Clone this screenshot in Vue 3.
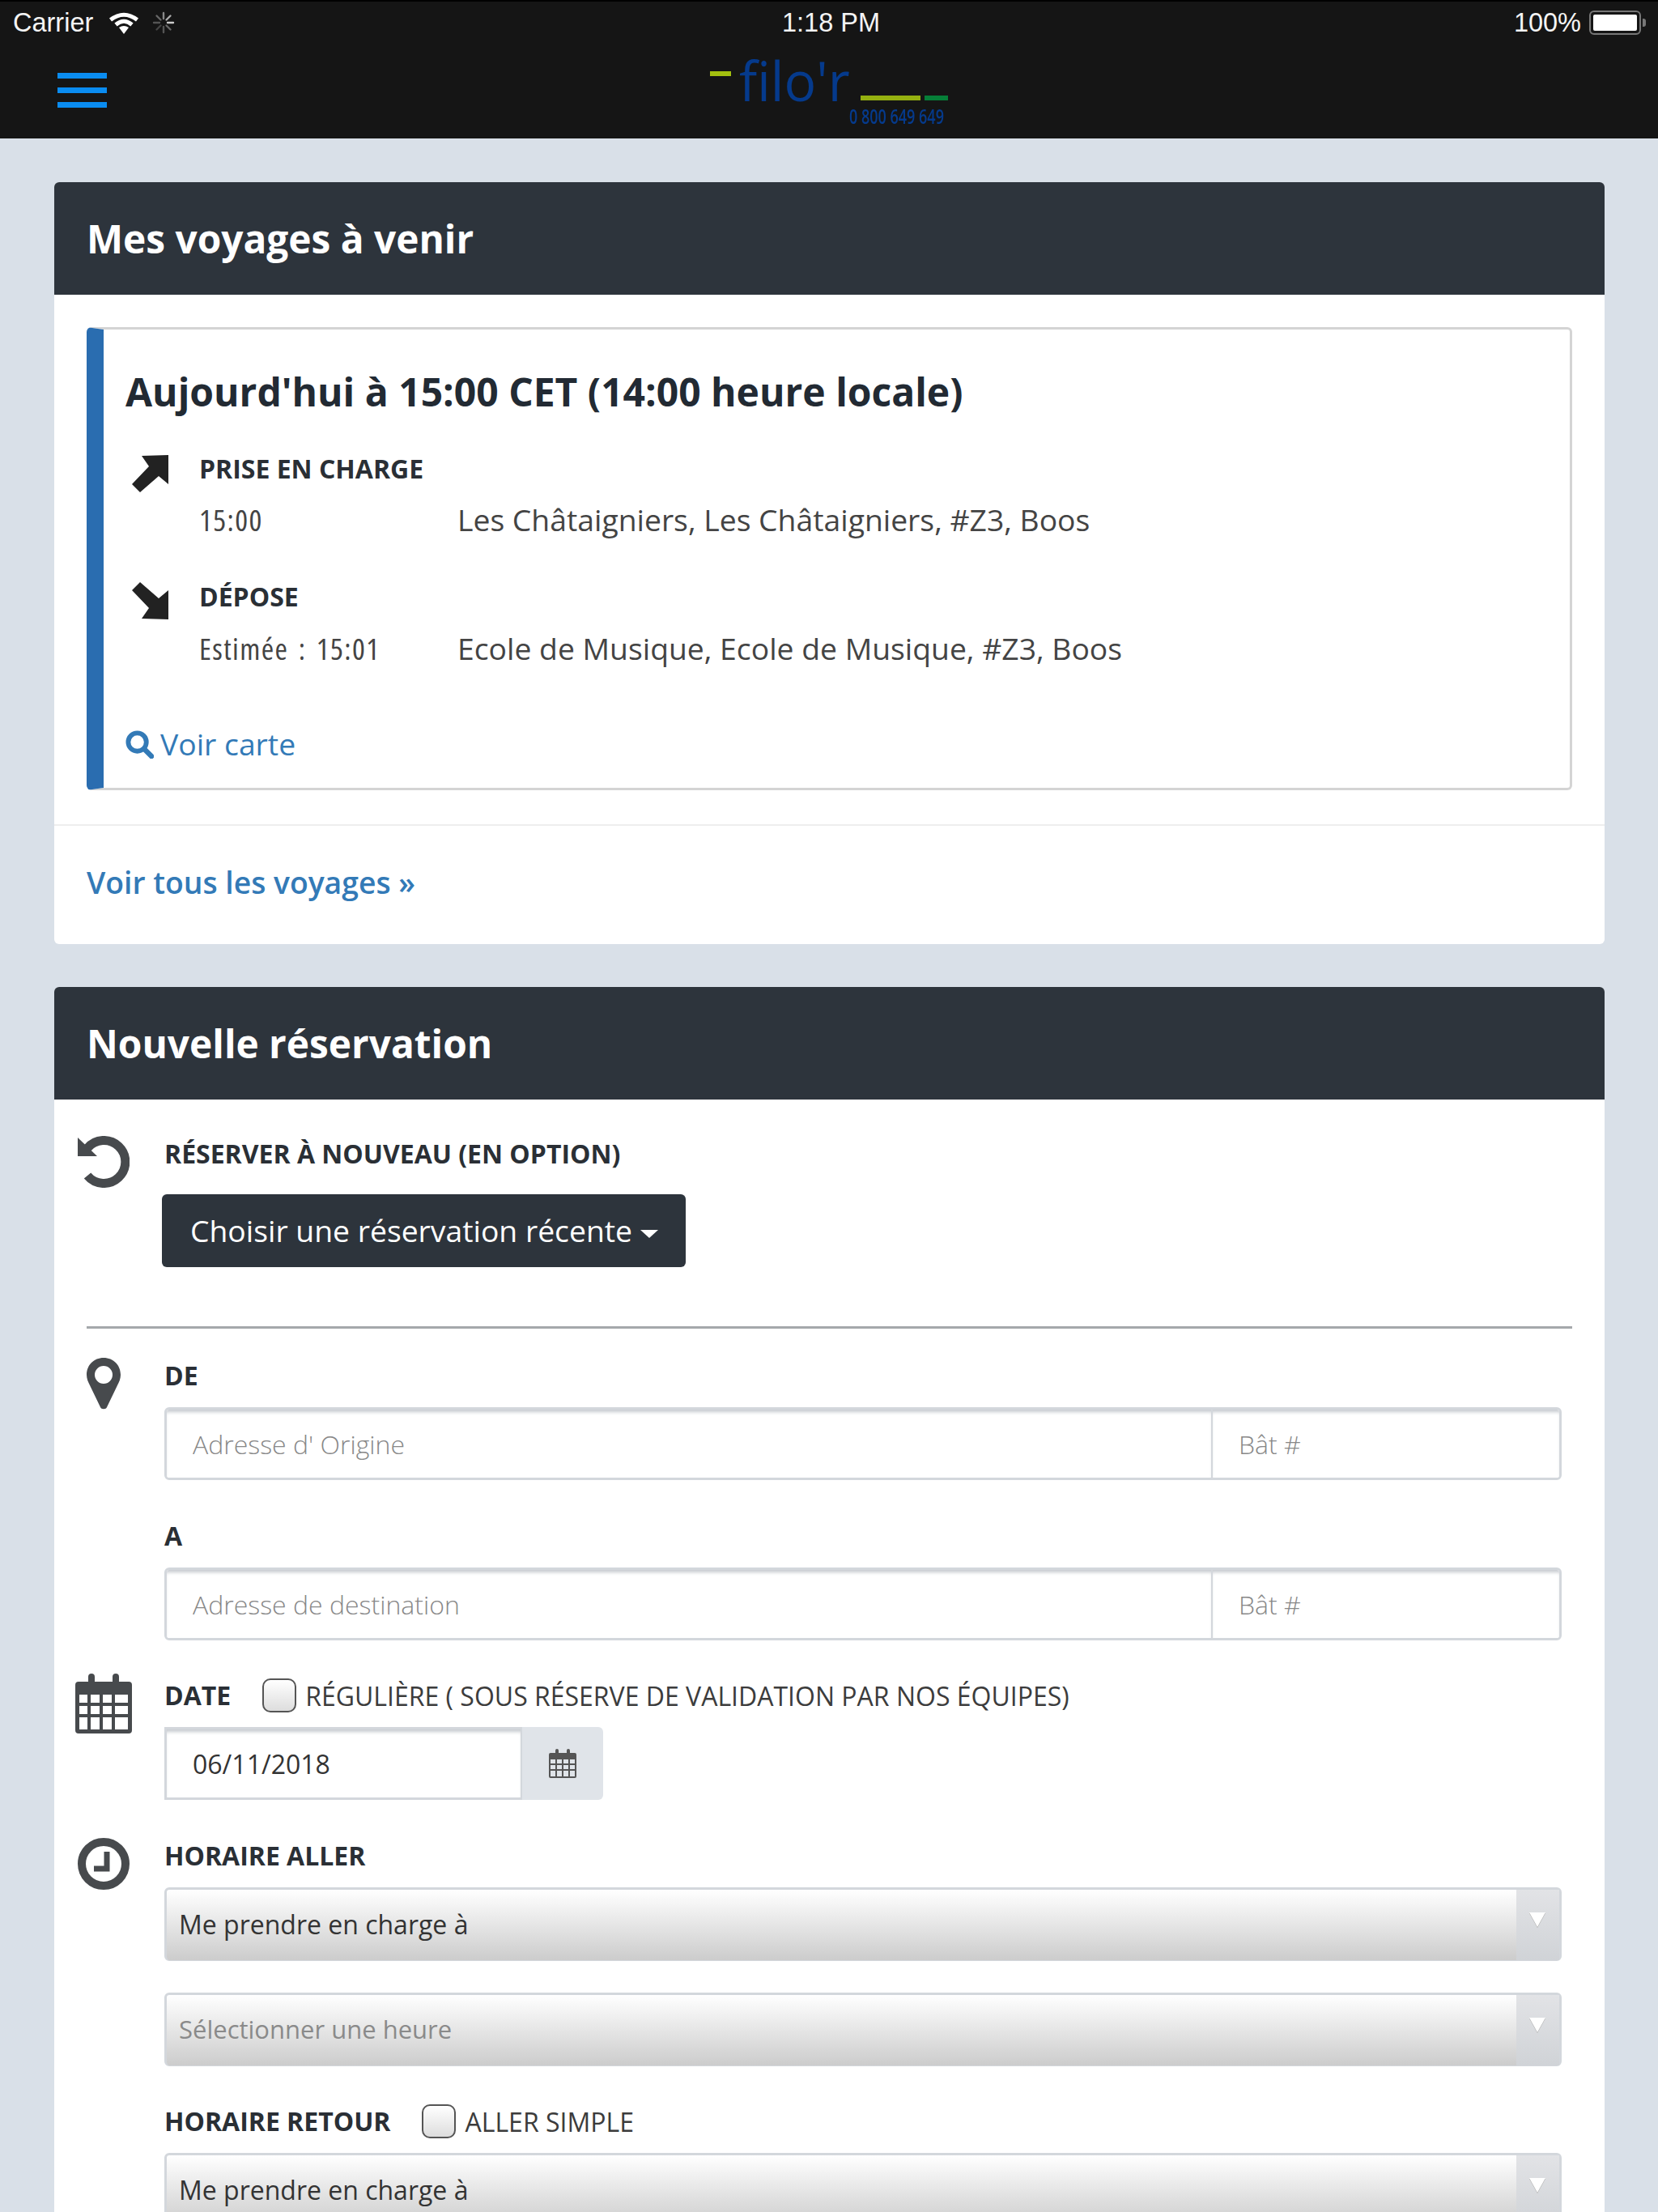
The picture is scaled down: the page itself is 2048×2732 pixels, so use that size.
<template>
  <div class="screen">
    <header class="topbar">
      <div class="status">
        <div class="status__left">
          <span>Carrier</span>
          <svg class="wifi" viewBox="0 0 38 27" width="38" height="27">
            <path d="M19 27 L13 19 Q19 15 25 19 Z" fill="#fff" />
            <path d="M2.500 9.500 Q19 -3 35.500 9.500" fill="none" stroke="#fff" stroke-width="5" />
            <path d="M9 15.500 Q19 7 29 15.500" fill="none" stroke="#fff" stroke-width="5" />
          </svg>
          <svg class="spinner" viewBox="0 0 28 28" width="28" height="28">
            <g stroke-width="2.4" stroke-linecap="round">
              <path d="M14 2v7" stroke="#888" />
              <path d="M22.500 5.500l-5 5" stroke="#aaa" />
              <path d="M26 14h-7" stroke="#ccc" />
              <path d="M22.500 22.500l-5-5" stroke="#666" />
              <path d="M14 26v-7" stroke="#555" />
              <path d="M5.500 22.500l5-5" stroke="#444" />
              <path d="M2 14h7" stroke="#555" />
              <path d="M5.500 5.500l5 5" stroke="#666" />
            </g>
          </svg>
        </div>
        <div class="status__time">1:18 PM</div>
        <div class="status__right">
          <span>100%</span>
          <span class="battery"><i class="battery__fill"></i></span>
          <span class="battery__tip"></span>
        </div>
      </div>
      <div class="nav">
        <button class="burger" type="button" aria-label="Menu"><i></i><i></i><i></i></button>
        <div class="logo">
          <i class="logo__dash"></i>
          <span class="logo__name">filo'r</span>
          <i class="logo__long"></i>
          <i class="logo__short"></i>
          <span class="logo__phone">0 800 649 649</span>
        </div>
      </div>
    </header>

    <main class="content">
      <section class="panel">
        <h2 class="panel__title">Mes voyages à venir</h2>
        <div class="panel__body">
          <article class="trip">
            <h3 class="trip__title">Aujourd'hui à 15:00 CET (14:00 heure locale)</h3>
            <div class="leg">
              <svg class="leg__icon" viewBox="0 0 45 45" width="45" height="45">
                <path d="M45 0V36L33 26 10 46 0 36 21 14 12 1Z" fill="#222" />
              </svg>
              <div>
                <div class="leg__label">PRISE EN CHARGE</div>
                <div class="leg__row">
                  <span class="leg__time">15:00</span>
                  <span>Les Châtaigniers, Les Châtaigniers, #Z3, Boos</span>
                </div>
              </div>
            </div>
            <div class="leg leg--last">
              <svg class="leg__icon" viewBox="0 0 45 45" width="45" height="45">
                <path d="M45 45V9L33 19 10 -1 0 9 21 31 12 44Z" fill="#222" />
              </svg>
              <div>
                <div class="leg__label">DÉPOSE</div>
                <div class="leg__row">
                  <span class="leg__time">Estimée : 15:01</span>
                  <span>Ecole de Musique, Ecole de Musique, #Z3, Boos</span>
                </div>
              </div>
            </div>
            <a class="trip__map">
              <svg viewBox="0 0 36 36" width="35" height="35">
                <circle cx="15" cy="15" r="11.500" fill="none" stroke="#337ab7" stroke-width="6" />
                <path d="M24 24l9 9" stroke="#337ab7" stroke-width="6.500" stroke-linecap="round" />
              </svg>
              Voir carte
            </a>
          </article>
        </div>
        <div class="panel__foot"><a>Voir tous les voyages »</a></div>
      </section>

      <section class="panel panel--form">
        <h2 class="panel__title">Nouvelle réservation</h2>
        <form class="booking">
          <div class="row row--again">
            <svg class="row__icon" viewBox="0 0 64 64" width="64" height="64">
              <path d="M12 15A26.500 26.500 0 1 1 12 49" fill="none" stroke="#474a4d" stroke-width="11" />
              <path d="M0 2V25H24Z" fill="#474a4d" />
            </svg>
            <div class="row__main">
              <label class="label">RÉSERVER À NOUVEAU (EN OPTION)</label>
              <button class="recent" type="button">Choisir une réservation récente <i class="caret"></i></button>
            </div>
          </div>

          <hr class="divider" />

          <div class="row row--place">
            <svg class="row__icon" viewBox="0 0 42 64" width="42" height="64">
              <path fill-rule="evenodd" d="M21 0C9 0 0 9 0 21c0 5 2 9 4 13l13 27c1 3 7 3 8 0l13-27c2-4 4-8 4-13C42 9 33 0 21 0Zm0 10a11 11 0 1 1 0 22 11 11 0 0 1 0-22Z" fill="#474a4d" />
            </svg>
            <div class="row__main">
              <label class="label">DE</label>
              <div class="address">
                <input class="address__street" placeholder="Adresse d' Origine" />
                <input class="address__unit" placeholder="Bât #" />
              </div>
              <label class="label label--gap">A</label>
              <div class="address">
                <input class="address__street" placeholder="Adresse de destination" />
                <input class="address__unit" placeholder="Bât #" />
              </div>
            </div>
          </div>

          <div class="row row--date">
            <svg class="row__icon row__icon--calendar" viewBox="0 0 70 74" width="70" height="74">
              <path fill-rule="evenodd" fill="#474a4d" d="M4 10H16V4a4 4 0 0 1 8 0V10H46V4a4 4 0 0 1 8 0V10H66a4 4 0 0 1 4 4V70a4 4 0 0 1-4 4H4a4 4 0 0 1-4-4V14a4 4 0 0 1 4-4ZM5 26V36H15V26ZM19 26V36H30V26ZM34 26V36H45V26ZM49 26V36H65V26ZM5 40V50H15V40ZM19 40V50H30V40ZM34 40V50H45V40ZM49 40V50H65V40ZM5 54V69H15V54ZM19 54V69H30V54ZM34 54V69H45V54ZM49 54V69H65V54Z" />
            </svg>
            <div class="row__main">
              <div class="check-line">
                <label class="label">DATE</label>
                <span class="check"></span>
                <span class="check-line__text">RÉGULIÈRE ( SOUS RÉSERVE DE VALIDATION PAR NOS ÉQUIPES)</span>
              </div>
              <div class="date">
                <input class="date__input" value="06/11/2018" />
                <span class="date__addon">
                  <svg viewBox="0 0 34 36" width="34" height="36">
                    <path fill-rule="evenodd" fill="#555" d="M2 5H8V2a2 2 0 0 1 4 0V5H22V2a2 2 0 0 1 4 0V5H32a2 2 0 0 1 2 2V34a2 2 0 0 1-2 2H2a2 2 0 0 1-2-2V7a2 2 0 0 1 2-2ZM2 13V18H8V13ZM10 13V18H16V13ZM18 13V18H24V13ZM26 13V18H32V13ZM2 20V25H8V20ZM10 20V25H16V20ZM18 20V25H24V20ZM26 20V25H32V20ZM2 27V34H8V27ZM10 27V34H16V27ZM18 27V34H24V27ZM26 27V34H32V27Z" />
                  </svg>
                </span>
              </div>
            </div>
          </div>

          <div class="row row--time">
            <svg class="row__icon" viewBox="0 0 64 64" width="64" height="64">
              <circle cx="32" cy="32" r="27" fill="none" stroke="#474a4d" stroke-width="10" />
              <path d="M36 17V38H20" fill="none" stroke="#474a4d" stroke-width="7" />
            </svg>
            <div class="row__main">
              <label class="label">HORAIRE ALLER</label>
              <div class="select"><span>Me prendre en charge à</span><i class="select__arrow"></i></div>
              <div class="select select--gap select--muted"><span>Sélectionner une heure</span><i class="select__arrow"></i></div>
              <div class="check-line check-line--return">
                <label class="label">HORAIRE RETOUR</label>
                <span class="check"></span>
                <span class="check-line__text">ALLER SIMPLE</span>
              </div>
              <div class="select"><span>Me prendre en charge à</span><i class="select__arrow"></i></div>
            </div>
          </div>
        </form>
      </section>
    </main>
  </div>
</template>

<script setup>
</script>

<style>
html,
body {
  margin: 0;
  background: #d9e0e8;
}
</style>

<style scoped>
* {
  box-sizing: border-box;
}

.screen {
  height: 2732px;
  overflow: hidden;
  background: #d9e0e8;
  font-family: "Open Sans", "Liberation Sans", sans-serif;
  color: #333;
}

.topbar {
  height: 171px;
  background: #151515;
  border-top: 2px solid #000;
}

.status {
  display: grid;
  grid-template-columns: 1fr auto 1fr;
  align-items: center;
  height: 52px;
  padding: 0 15px 0 16px;
  font-family: "Liberation Sans", sans-serif;
  font-size: 32.500px;
  color: #f4f4f4;
}

.status__left {
  display: flex;
  align-items: center;
  gap: 16px;
}

.status__time {
  margin-left: 4px;
}

.wifi {
  margin-left: 3px;
}

.status__right {
  display: flex;
  align-items: center;
  justify-content: flex-end;
}

.battery {
  display: block;
  width: 64px;
  height: 30px;
  margin-left: 10px;
  padding: 3px;
  border: 2px solid #777;
  border-radius: 6px;
}

.battery__fill {
  display: block;
  height: 100%;
  background: #fff;
  border-radius: 2px;
}

.battery__tip {
  width: 4px;
  height: 10px;
  margin-left: 2px;
  background: #777;
  border-radius: 0 3px 3px 0;
}

.nav {
  display: flex;
  position: relative;
  height: 117px;
  padding: 36px 0 0 71px;
}

.burger {
  display: flex;
  flex-direction: column;
  gap: 11px;
  width: 61px;
  height: 43px;
  padding: 0;
  background: none;
  border: 0;
}

.burger i {
  display: block;
  width: 61px;
  height: 7px;
  background: #0a8cf0;
}

.logo {
  position: absolute;
  left: 875px;
  top: 0;
  width: 300px;
  height: 117px;
}

.logo__dash,
.logo__long,
.logo__short {
  position: absolute;
  display: block;
  height: 6px;
}

.logo__dash {
  left: 2px;
  top: 34px;
  width: 26px;
  background: #a3c00f;
}

.logo__long {
  left: 188px;
  top: 64px;
  width: 74px;
  background: #94b010;
}

.logo__short {
  left: 267px;
  top: 64px;
  width: 29px;
  background: #067f38;
}

.logo__name {
  position: absolute;
  left: 38px;
  top: 14px;
  font-size: 68px;
  font-weight: 500;
  line-height: 62px;
  color: #053a8c;
  transform: scaleX(0.97);
  transform-origin: left top;
}

.logo__phone {
  position: absolute;
  left: 174px;
  top: 77px;
  font-size: 25px;
  font-weight: 600;
  line-height: 24px;
  white-space: nowrap;
  color: #053a8c;
  transform: scaleX(0.72);
  transform-origin: left top;
}

.content {
  display: flex;
  flex-direction: column;
  gap: 53px;
  padding: 54px 66px 0 67px;
}

.panel {
  overflow: hidden;
  background: #fff;
  border-radius: 6px;
}

.panel__title {
  margin: 0;
  padding: 0 40px;
  height: 139px;
  font-size: 47.800px;
  font-weight: 700;
  line-height: 139px;
  color: #fff;
  background: #2d343c;
}

.panel__body {
  padding: 40px 40px 42px;
  border-bottom: 2px solid #eee;
}

.trip {
  height: 572px;
  padding: 47px 0 0 27px;
  background: #fff;
  border: 3px solid #d4d4d4;
  border-left: 21px solid #2a6db0;
  border-radius: 6px;
}

.trip__title {
  margin: 0 0 43px;
  font-size: 48px;
  font-weight: 700;
  line-height: 60px;
  color: #222a33;
}

.leg {
  display: flex;
  gap: 38px;
  margin-bottom: 48px;
}

.leg--last .leg__row {
  margin-top: 17px;
}

.leg__icon {
  flex: none;
  margin: 5px 0 0 8px;
  overflow: visible;
}

.leg__label {
  font-size: 32px;
  font-weight: 700;
  line-height: 44px;
  color: #2a2f35;
}

.leg__row {
  display: flex;
  margin-top: 16px;
  font-size: 37.300px;
  line-height: 50px;
  color: #444;
}

.leg__time {
  flex: none;
  width: 319px;
  font-stretch: 75%;
  letter-spacing: 1.400px;
  word-spacing: 4px;
}

.trip__map {
  display: flex;
  align-items: center;
  gap: 8px;
  margin-top: 68px;
  font-size: 37.300px;
  line-height: 50px;
  color: #337ab7;
}

.panel__foot {
  height: 146px;
  padding: 45px 40px 0;
  font-size: 37.300px;
  font-weight: 600;
  line-height: 50px;
  color: #337ab7;
}

.panel--form {
  flex: none;
}

.booking {
  padding: 0 40px 0 29px;
}

.row {
  display: flex;
}

.row__icon {
  flex: none;
}

.row__main {
  flex: 1;
  min-width: 0;
}

.label {
  display: block;
  font-size: 32px;
  font-weight: 700;
  line-height: 44px;
  color: #2a2f35;
}

.row--again {
  padding-top: 45px;
  gap: 43px;
}

.recent {
  display: block;
  width: 647px;
  height: 90px;
  margin: 28px 0 0 -3px;
  padding: 0 35px 2px;
  font: 400 37.300px "Open Sans", sans-serif;
  text-align: left;
  white-space: nowrap;
  color: #fff;
  background: #2d343c;
  border: 0;
  border-radius: 6px;
}

.caret {
  display: inline-block;
  vertical-align: middle;
  border-top: 10px solid #fff;
  border-left: 11px solid transparent;
  border-right: 11px solid transparent;
}

.divider {
  height: 3px;
  margin: 73px 0 0 11px;
  background: #a5a8ab;
  border: 0;
}

.row--place {
  padding: 36px 13px 0 11px;
  gap: 54px;
}

.address {
  display: flex;
  height: 90px;
  margin-top: 17px;
  overflow: hidden;
  border: 3px solid #d3d7dc;
  border-radius: 6px;
}

.address input,
.date__input {
  min-width: 0;
  padding: 0 32px;
  font: 400 32px "Open Sans", sans-serif;
  color: #333;
  background: #fff;
  border: 0;
  outline: 0;
  box-shadow: inset 0 5px 4px -2px #c6cacf;
}

.address input::placeholder {
  font-weight: 300;
  color: #888;
}

.address__street {
  flex: 1;
}

.address__unit {
  flex: none;
  width: 430px;
  border-left: 2px solid #d3d7dc !important;
}

.label--gap {
  margin-top: 47px;
}

.row--date {
  padding: 46px 13px 0 0;
  gap: 40px;
}

.row__icon--calendar {
  margin: -5px 0 0 -3px;
}

.check-line {
  display: flex;
  align-items: center;
  height: 44px;
}

.check {
  width: 42px;
  height: 42px;
  margin-left: 39px;
  background: linear-gradient(#fff, #ddd);
  border: 2px solid #555;
  border-radius: 10px;
}

.check-line__text {
  margin-left: 11px;
  font-size: 32px;
  color: #3c3c3c;
}

.date {
  display: flex;
  width: 542px;
  height: 90px;
  margin-top: 17px;
}

.date__input {
  width: 442px;
  border: 3px solid #d3d7dc;
  border-right-width: 2px;
}

.date__addon {
  display: flex;
  flex: 1;
  align-items: center;
  justify-content: center;
  background: #e0e4e9;
  border-radius: 0 6px 6px 0;
}

.row--time {
  padding: 47px 13px 0 0;
  gap: 43px;
}

.select {
  display: flex;
  position: relative;
  align-items: center;
  height: 91px;
  margin-top: 17px;
  padding: 0 15px 3px;
  font-size: 32px;
  color: #333;
  background: linear-gradient(#fff, #ccc);
  border: 3px solid #d3d7dc;
  border-bottom-width: 1px;
  border-radius: 6px;
}

.select::after {
  content: "";
  position: absolute;
  top: 0;
  right: 0;
  bottom: 0;
  width: 53px;
  background: linear-gradient(#e2e3e6, #d0d3d7);
}

.select--gap {
  margin-top: 39px;
}

.select--muted {
  font-size: 31px;
  color: #8a8a8a;
}

.select__arrow {
  position: absolute;
  z-index: 1;
  top: 28px;
  right: 17px;
  border-top: 18px solid #fff;
  border-left: 10px solid transparent;
  border-right: 10px solid transparent;
  filter: drop-shadow(0 1px 0 #aaa);
}

.check-line--return {
  margin-top: 46px;
}
</style>
